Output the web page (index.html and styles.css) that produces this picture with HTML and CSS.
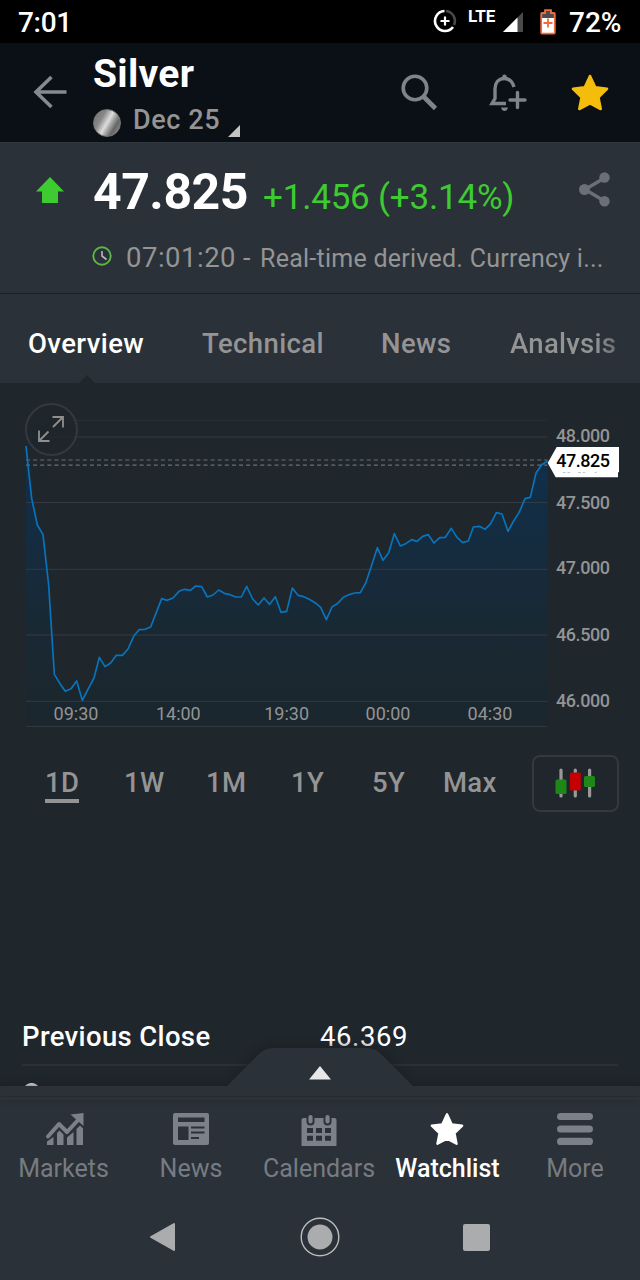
FILE: index.html
```
<!DOCTYPE html>
<html lang="en">
<head>
    <meta charset="UTF-8">
    <meta name="viewport" content="width=device-width, initial-scale=1.0">
    <title>Silver Dec 25</title>
    <link rel="stylesheet" href="styles.css">
</head>
<body>
    <!-- Status bar -->
    <div class="status-bar">
        <span class="clock">7:01</span>
        <svg class="saver" width="24" height="24" viewBox="0 0 24 24" fill="none" stroke-width="2.6">
            <path d="M13 2a10 10 0 0 1 8 14" stroke="#4a4a4a"/>
            <path d="M11.500 2A10 10 0 1 0 20 18" stroke="#fff"/>
            <path d="M12 7.500v9M7.500 12h9" stroke="#fff" stroke-width="2.200"/>
        </svg>
        <span class="lte">LTE</span>
        <svg class="signal" width="20" height="20" viewBox="0 0 20 20">
            <path d="M0 20L20 0v20z" fill="#4a4a4a"/>
            <path d="M0 20L14.500 5.500v14.500z" fill="#fff"/>
        </svg>
        <svg class="battery" width="16" height="26" viewBox="0 0 16 26">
            <path d="M2 4h3V1.200h6V4h3q.8 0 .8.8v19q0 .8-.8.8H2q-.8 0-.8-.8v-19Q1.200 4 2 4z" fill="#fff" stroke="#f2693c" stroke-width="1.800"/>
            <path d="M2.100 4.900h3.800V2.100h4.200v2.800h3.800V9H2.100z" fill="#4d4d4d"/>
            <path d="M8 9.500v9M3.500 14h9" stroke="#f2693c" stroke-width="1.800"/>
        </svg>
        <span class="percent">72%</span>
    </div>

    <!-- Header -->
    <div class="header">
        <svg class="back" width="34" height="34" viewBox="0 0 34 34" fill="none" stroke="#858a91" stroke-width="3.600">
            <path d="M33.500 17H3M18.500 2L3 17l15.500 15"/>
        </svg>
        <div class="title">
            <h1>Silver</h1>
            <div class="contract">
                <span class="coin"></span>
                <span class="month">Dec 25</span>
                <svg class="corner" width="12" height="12" viewBox="0 0 12 12"><path d="M12 0v12H0z" fill="#c4c4c4"/></svg>
            </div>
        </div>
        <svg class="search" width="37" height="37" viewBox="0 0 37 37" fill="none" stroke="#7f848b">
            <circle cx="14" cy="14" r="11.800" stroke-width="3.600"/>
            <path d="M22.500 22.500L34.500 34.500" stroke-width="4.600"/>
        </svg>
        <svg class="bell" width="38" height="38" viewBox="0 0 38 38" fill="none" stroke="#7f848b" stroke-width="3.400">
            <path d="M25 13Q22.500 4.500 15.500 4.500C9 4.500 6 9.500 6 15v9.500L3 29.500h14"/>
            <circle cx="15.500" cy="2.900" r="2.300" fill="#7f848b" stroke="none"/>
            <path d="M12 33.500h7q-1 3.500-3.500 3.500t-3.500-3.500z" fill="#7f848b" stroke="none"/>
            <path d="M28.500 18.500v15M21 26h15" stroke-linecap="round"/>
        </svg>
        <svg class="star" width="38" height="37" viewBox="0 0 38 37">
            <path d="M19 2l5.200 11.300L36 14.800l-8.600 8.500L29.700 35 19 29.300 8.300 35l2.300-11.700L2 14.800l11.800-1.500z" fill="#f5bd0b" stroke="#f5bd0b" stroke-width="2.600" stroke-linejoin="round"/>
        </svg>
    </div>

    <!-- Quote -->
    <div class="quote">
        <svg class="up" width="28" height="26" viewBox="0 0 28 26"><path d="M14 0l14 14.500h-6V26H6V14.500H0z" fill="#3ecb31"/></svg>
        <div class="numbers">
            <div class="price-row">
                <span class="price">47.825</span>
                <span class="change">+1.456 (+3.14%)</span>
            </div>
            <div class="info">
                <svg width="20" height="20" viewBox="0 0 20 20" fill="none">
                    <circle cx="10" cy="10" r="8.700" stroke="#5cb748" stroke-width="1.900"/>
                    <path d="M10 5v5l4.500 3.500" stroke="#b4b9bd" stroke-width="1.600"/>
                </svg>
                <span class="time">07:01:20</span>
                <span class="dash">-</span>
                <span class="note">Real-time derived. Currency i...</span>
            </div>
        </div>
        <svg class="share" width="32" height="35" viewBox="0 0 32 35" fill="#6b6f77">
            <path d="M25.500 6L6 17.500 25.500 29" fill="none" stroke="#6b6f77" stroke-width="3.400"/>
            <circle cx="25.500" cy="5.500" r="5.200"/>
            <circle cx="5.500" cy="17.500" r="5.500"/>
            <circle cx="25.500" cy="29.200" r="5.200"/>
        </svg>
    </div>

    <!-- Tabs -->
    <div class="tabs">
        <span class="tab active">Overview</span>
        <span class="tab technical">Technical</span>
        <span class="tab news">News</span>
        <span class="tab analysis">Analysis</span>
    </div>

    <!-- Chart, drawn at three units per pixel -->
    <div class="chart">
        <svg width="614" height="344" viewBox="0 0 1842 1032">
            <defs>
                <linearGradient id="area" x1="0" y1="183" x2="0" y2="1024" gradientUnits="userSpaceOnUse">
                    <stop offset="0" stop-color="#0e304c"/>
                    <stop offset=".5" stop-color="#172a3a"/>
                    <stop offset=".65" stop-color="#192933"/>
                    <stop offset="1" stop-color="#1b262d"/>
                </linearGradient>
            </defs>
            <path class="area" d="M78 183L95 340 112 420 129 449 146 600 163 868 180 896 196 919 213 911 230 888 247 946 265 911 282 879 298 817 315 845 332 834 349 811 367 811 384 792 401 754 417 734 435 733 452 726 469 682 485 641 502 646 519 639 537 619 554 613 571 616 587 603 605 605 622 636 639 630 656 615 673 625 690 629 707 636 724 636 740 604 758 642 775 660 792 639 809 658 826 635 843 682 860 679 877 609 894 631 911 635 928 643 945 653 962 667 979 704 996 666 1013 655 1031 636 1047 629 1064 624 1081 623 1098 592 1115 541 1132 488 1149 526 1166 503 1183 446 1201 483 1217 476 1235 464 1251 469 1268 454 1285 449 1302 474 1319 458 1336 457 1354 430 1371 457 1388 473 1405 468 1420 426 1438 424 1455 433 1472 416 1489 383 1506 387 1524 439 1541 408 1557 383 1575 341 1591 337 1608 264 1625 239 1643 228V1024H78z"/>
            <path class="grid faint" d="M78 106.500H1642"/>
            <path class="grid" d="M78 156H1642M78 352.500H1642M78 553H1642M78 750H1642M78 949H1642M78 1024H1642"/>
            <path class="dashes" d="M78 225H1642M78 240.500H1642"/>
            <path class="line" d="M78 183L95 340 112 420 129 449 146 600 163 868 180 896 196 919 213 911 230 888 247 946 265 911 282 879 298 817 315 845 332 834 349 811 367 811 384 792 401 754 417 734 435 733 452 726 469 682 485 641 502 646 519 639 537 619 554 613 571 616 587 603 605 605 622 636 639 630 656 615 673 625 690 629 707 636 724 636 740 604 758 642 775 660 792 639 809 658 826 635 843 682 860 679 877 609 894 631 911 635 928 643 945 653 962 667 979 704 996 666 1013 655 1031 636 1047 629 1064 624 1081 623 1098 592 1115 541 1132 488 1149 526 1166 503 1183 446 1201 483 1217 476 1235 464 1251 469 1268 454 1285 449 1302 474 1319 458 1336 457 1354 430 1371 457 1388 473 1405 468 1420 426 1438 424 1455 433 1472 416 1489 383 1506 387 1524 439 1541 408 1557 383 1575 341 1591 337 1608 264 1625 239 1643 228"/>
            <g class="hours">
                <text x="228" y="1005">09:30</text>
                <text x="535" y="1005">14:00</text>
                <text x="860" y="1005">19:30</text>
                <text x="1164" y="1005">00:00</text>
                <text x="1470" y="1005">04:30</text>
            </g>
            <g class="prices">
                <text x="1668" y="170" textLength="162">48.000</text>
                <text x="1668" y="371" textLength="162">47.500</text>
                <text x="1668" y="568" textLength="162">47.000</text>
                <text x="1668" y="768" textLength="162">46.500</text>
                <text x="1668" y="966" textLength="162">46.000</text>
            </g>
            <path d="M1643 234L1670 186H1857V262H1854V277H1667z" fill="#fff"/>
            <path d="M1688 262.500h28M1734 262.500h22M1784 262.500h6" stroke="#aaa" stroke-width="2" stroke-dasharray="9 5"/>
            <text class="current" x="1669" y="246" textLength="161">47.825</text>
        </svg>
        <div class="expand">
            <svg width="26" height="26" viewBox="0 0 26 26" fill="none" stroke="#8f8f8f" stroke-width="1.800">
                <path d="M14.500 1H25v10.500M25 1L15 11M1 14.500V25h10.500M1 25l9.500-9.500"/>
            </svg>
        </div>
    </div>

    <!-- Ranges -->
    <div class="ranges">
        <span class="range selected">1D</span>
        <span class="range w1">1W</span>
        <span class="range m1">1M</span>
        <span class="range y1">1Y</span>
        <span class="range y5">5Y</span>
        <span class="range max">Max</span>
        <div class="candles">
            <svg width="40" height="30" viewBox="0 0 40 30">
                <path d="M6 2v26M20.300 2v26M34.600 2v26" stroke="#999" stroke-width="3.200" stroke-linecap="round"/>
                <rect x=".5" y="11.500" width="11" height="14.500" rx="1.500" fill="#1f8717"/>
                <rect x="14.800" y="4.500" width="11" height="18" rx="1.500" fill="#c40000"/>
                <rect x="29" y="8" width="11" height="11" rx="1.500" fill="#1f8717"/>
            </svg>
        </div>
    </div>

    <!-- Details -->
    <div class="details">
        <div class="row"><span class="name">Previous Close</span><span class="value">46.369</span></div>
        <div class="row"><span class="name">Open</span></div>
    </div>

    <!-- Bottom navigation -->
    <div class="bottom">
        <svg class="drawer" width="640" height="64" viewBox="0 0 640 64">
            <path d="M-20 50H227L261 16Q267 12 274 12H366Q375 12 380 17L413 50H660V104H-20z" fill="#2b3138"/>
            <path d="M309 43.500h22l-11-13.500z" fill="#e8e8e8"/>
        </svg>
        <div class="nav">
            <div class="item">
                <svg class="trend" width="40" height="34" viewBox="0 0 40 34" fill="#7c8088">
                    <path d="M3 24.500L14 12l8 8L34 7" fill="none" stroke="#7c8088" stroke-width="4" stroke-linejoin="round" stroke-linecap="round"/>
                    <path d="M25.500 2.500L38.500 1 38.500 14z"/>
                    <path d="M2 29.500l6.500-4.500V33H2zM12 21l2.500-2.500 4 4V33H12zM22 25.500l6.500-5.500V33H22zM31.500 17l3.500-3.500 3 3V33h-6.500z"/>
                </svg>
                <span class="markets">Markets</span>
            </div>
            <div class="item">
                <svg width="36" height="34" viewBox="0 0 36 34">
                    <rect y="1" width="36" height="32" rx="2" fill="#7c8088"/>
                    <path d="M5 5.500h26.500V10H5zM5 14.500h10.500v13.500H5zM18 14.500h13.500v2H18zM18 19.500h13.500v2H18zM18 25h8v2h-8z" fill="#2b3138"/>
                </svg>
                <span>News</span>
            </div>
            <div class="item">
                <svg width="36" height="34" viewBox="0 0 36 34">
                    <rect x=".5" y="6" width="35" height="29" rx="2" fill="#7c8088"/>
                    <path d="M9.500 5v4.500M26.500 5v4.500" stroke="#2b3138" stroke-width="8" stroke-linecap="round"/>
                    <path d="M9.500 5v4.500M26.500 5v4.500" stroke="#7c8088" stroke-width="4.200" stroke-linecap="round"/>
                    <path d="M6 16h6v5H6zM15 16h6v5h-6zM24 16h6v5h-6zM6 23.800h6v5H6zM15 23.800h6v5h-6zM24 23.800h6v5h-6z" fill="#2b3138"/>
                </svg>
                <span class="calendars">Calendars</span>
            </div>
            <div class="item current-item">
                <svg width="34" height="34" viewBox="0 0 38 37">
                    <path d="M19 2l5.200 11.300L36 14.800l-8.600 8.500L29.700 35 19 29.300 8.300 35l2.300-11.700L2 14.800l11.800-1.500z" fill="#fff" stroke="#fff" stroke-width="2.600" stroke-linejoin="round"/>
                </svg>
                <span class="watchlist">Watchlist</span>
            </div>
            <div class="item">
                <svg width="36" height="34" viewBox="0 0 36 34">
                    <path d="M3.600 4.500h28.800M3.600 17h28.800M3.600 29.400h28.800" stroke="#7c8088" stroke-width="7.200" stroke-linecap="round"/>
                </svg>
                <span>More</span>
            </div>
        </div>
        <div class="system">
            <svg width="27" height="30" viewBox="0 0 27 30"><path d="M2 15L25 2v26z" fill="#abacae" stroke="#abacae" stroke-width="2" stroke-linejoin="round"/></svg>
            <svg width="40" height="40" viewBox="0 0 40 40"><circle cx="20" cy="20" r="18.800" fill="none" stroke="#bbbcbe" stroke-width="1.400"/><circle cx="20" cy="20" r="12.500" fill="#abacae"/></svg>
            <svg width="27" height="27" viewBox="0 0 27 27"><rect width="27" height="27" rx="2" fill="#abacae"/></svg>
        </div>
    </div>
</body>
</html>
```
FILE: styles.css
```
* {
    margin: 0;
    padding: 0;
    box-sizing: border-box;
}
body {
    width: 640px;
    height: 1280px;
    overflow: hidden;
    position: relative;
    background: #1f262c;
    color: #949494;
    font-family: Roboto, "Liberation Sans", sans-serif;
    white-space: nowrap;
}
svg {
    display: block;
    flex: none;
}

/* Status bar */
.status-bar {
    display: flex;
    height: 43px;
    padding: 0 18px;
    background: #000;
    color: #fff;
    font-size: 28px;
    font-weight: 500;
    line-height: 45px;
}
.clock {
    width: 415px;
    letter-spacing: -.3px;
}
.saver {
    margin-top: 9px;
}
.lte {
    width: 35px;
    margin-left: 11px;
    font-size: 17px;
    font-weight: 700;
    line-height: 33px;
}
.signal {
    margin-top: 12px;
}
.battery {
    margin: 9px 13px 0 17px;
}

/* Header */
.header {
    display: flex;
    height: 99px;
    background: #0b0f16;
}
.back {
    margin: 32px 0 0 33px;
}
.title {
    width: 308px;
    margin-left: 26px;
}
h1 {
    margin-top: 8px;
    color: #fff;
    font-size: 39px;
    line-height: 46px;
    letter-spacing: .3px;
}
.contract {
    display: flex;
    height: 45px;
}
.coin {
    width: 28px;
    height: 28px;
    margin: 12px 12px 0 0;
    border: 1px solid #777;
    border-radius: 50%;
    background: linear-gradient(120deg, #777 10%, #888 30%, #ddd 50%, #aaa 60%, #666 75%, #999);
}
.month {
    width: 95px;
    font-size: 27px;
    font-weight: 500;
    line-height: 46px;
    letter-spacing: .6px;
}
.corner {
    margin-top: 28px;
}
.search {
    margin-top: 31px;
}
.bell {
    margin: 31px 0 0 51px;
}
.star {
    margin: 31px 0 0 44px;
}

/* Quote */
.quote {
    display: flex;
    height: 152px;
    border-top: 1px solid #31373f;
    border-bottom: 1px solid #1b2026;
    background: #2b3138;
}
.up {
    margin: 34px 0 0 36px;
}
.numbers {
    width: 515px;
    margin-left: 29px;
}
.price-row {
    display: flex;
    align-items: baseline;
    height: 85px;
    padding-top: 20px;
}
.price {
    width: 170px;
    color: #fff;
    font-size: 50px;
    font-weight: 700;
    letter-spacing: -.5px;
}
.change {
    color: #3ecb31;
    font-size: 35px;
    letter-spacing: -.2px;
}
.info {
    display: flex;
    align-items: baseline;
    line-height: 60px;
}
.info svg {
    align-self: flex-start;
    margin: 18px 14px 0 -1px;
}
.time {
    width: 117px;
    font-size: 27.5px;
    letter-spacing: .5px;
}
.dash {
    width: 17px;
    font-size: 27px;
}
.note {
    font-size: 25px;
    letter-spacing: .25px;
}
.share {
    margin: 29px 0 0 -29px;
}

/* Tabs */
.tabs {
    display: flex;
    position: relative;
    height: 89px;
    padding-left: 28px;
    background: #2b3138;
    font-size: 27.5px;
    font-weight: 500;
    line-height: 100px;
    letter-spacing: .4px;
}
.tabs::after {
    content: "";
    position: absolute;
    left: 79px;
    bottom: 0;
    border: 8px solid transparent;
    border-top: 0;
    border-bottom-color: #1f262c;
}
.active {
    width: 174px;
    color: #fff;
}
.technical {
    width: 179px;
}
.news {
    width: 129px;
}
.analysis {
    height: 60px;
    overflow: hidden;
    letter-spacing: .3px;
    background: linear-gradient(90deg, #949494 80%, #6b6e72);
    background-clip: text;
    color: transparent;
}

/* Chart */
.chart {
    position: relative;
    height: 372px;
    padding-top: 2px;
}
.chart svg {
    overflow: visible;
}
.area {
    fill: url(#area);
}
.grid {
    stroke: #343a42;
    stroke-width: 3;
}
.faint {
    stroke: #282e35;
}
.dashes {
    stroke: #6b6f73;
    stroke-width: 3.600;
    stroke-dasharray: 12 9.300;
}
.line {
    fill: none;
    stroke: #0874bd;
    stroke-width: 5;
    stroke-linejoin: round;
}
.chart text {
    font-size: 54px;
    fill: #949494;
}
.hours text {
    text-anchor: middle;
}
.chart .prices text,
.chart .current {
    font-weight: 500;
}
.chart .current {
    fill: #000;
}
.expand {
    display: flex;
    align-items: center;
    justify-content: center;
    position: absolute;
    left: 25px;
    top: 20px;
    width: 53px;
    height: 53px;
    padding: 0 1px 1px 0;
    border: 2px solid #343840;
    border-radius: 50%;
    background: rgba(31, 38, 44, .85);
}

/* Ranges */
.ranges {
    display: flex;
    height: 254px;
    padding-left: 45px;
    font-size: 27.5px;
    font-weight: 500;
}
.range {
    height: 48px;
    line-height: 56px;
    letter-spacing: .3px;
}
.selected {
    width: 34px;
    margin-right: 45px;
    border-bottom: 4px solid #949494;
}
.w1 {
    width: 82px;
}
.m1 {
    width: 85px;
}
.y1 {
    width: 81px;
}
.y5 {
    width: 71px;
}
.max {
    width: 89px;
}
.candles {
    display: flex;
    align-items: center;
    justify-content: center;
    width: 87px;
    height: 57px;
    padding: 0 2px 2px 0;
    border: 2px solid #343840;
    border-radius: 8px;
}

/* Details */
.details {
    padding: 0 22px;
}
.row {
    display: flex;
    height: 57px;
    border-bottom: 2px solid #2b3037;
    color: #fff;
    font-size: 27.5px;
    line-height: 56px;
    letter-spacing: .6px;
}
.name {
    width: 298px;
    font-weight: 500;
    letter-spacing: .35px;
}

/* Bottom navigation */
.bottom {
    position: absolute;
    left: 0;
    bottom: 0;
    width: 640px;
    height: 194px;
    background: #2b3138;
}
.drawer {
    position: absolute;
    left: 0;
    top: -50px;
    filter: drop-shadow(0 -2px 4px rgba(24, 26, 28, .6));
}
.nav {
    display: flex;
    position: relative;
    left: -1px;
    height: 118px;
    margin-top: 10px;
    padding-top: 15px;
    border-top: 1px solid #252b31;
}
.item {
    display: flex;
    flex-direction: column;
    align-items: center;
    width: 128px;
    color: #777b82;
    font-size: 25px;
    line-height: 46px;
}
.trend {
    margin-left: 3px;
}
.markets {
    margin-left: 1px;
}
.current-item {
    color: #fff;
}
.watchlist {
    margin-left: 1px;
    font-weight: 500;
}
.system {
    display: flex;
    align-items: center;
    justify-content: space-between;
    height: 46px;
    padding: 0 150px 0 149px;
}
```
